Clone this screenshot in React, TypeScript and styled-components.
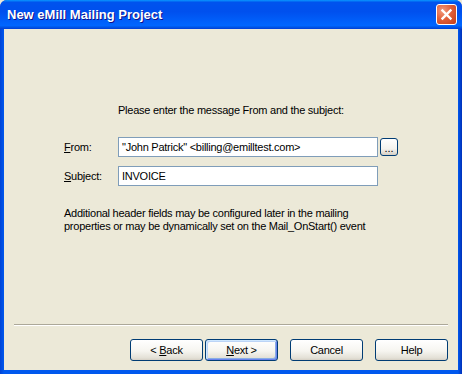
import styled, { createGlobalStyle } from 'styled-components';

const GlobalStyle = createGlobalStyle`
  html, body {
    margin: 0;
    padding: 0;
    background: #ece9d8;
    overflow: hidden;
  }
`;

const Window = styled.div`
  width: 462px;
  height: 374px;
  display: flex;
  flex-direction: column;
  font-family: 'Liberation Sans', Arial, sans-serif;
  font-size: 11px;
  letter-spacing: -0.25px;
  color: #000;
  background: #0831d9;
  border-radius: 7px 7px 0 0;
  overflow: hidden;
`;

const TitleBar = styled.div`
  height: 29px;
  flex-shrink: 0;
  display: flex;
  align-items: center;
  justify-content: space-between;
  padding: 0 5px 0 7px;
  box-sizing: border-box;
  background: linear-gradient(
    to bottom,
    #0997ff 0%,
    #0053ee 8%,
    #0050ee 40%,
    #06f 88%,
    #0055e5 94%,
    #003dd7 100%
  );
`;

const Title = styled.span`
  font-family: 'Liberation Sans', Arial, sans-serif;
  font-weight: bold;
  font-size: 13px;
  color: #fff;
  text-shadow: 1px 1px 0 #0f1089;
  letter-spacing: 0;
`;

const CloseButton = styled.div`
  width: 21px;
  height: 21px;
  box-sizing: border-box;
  border: 1px solid #fff;
  border-radius: 3px;
  display: flex;
  align-items: center;
  justify-content: center;
  background: radial-gradient(circle at 30% 30%, #f29b7e 0%, #e2613b 45%, #c43d16 100%);
`;

const Frame = styled.div`
  flex: 1;
  display: flex;
  padding: 0 4px 4px 4px;
  background: linear-gradient(to right, #0043d6, #0058ee 4px, #0058ee calc(100% - 4px), #0030b8);
`;

const Client = styled.div`
  flex: 1;
  display: flex;
  flex-direction: column;
  background: #ece9d8;
`;

const Content = styled.div`
  flex: 1;
  display: flex;
  flex-direction: column;
  padding: 75px 0 0 60px;
`;

const Prompt = styled.div`
  margin-left: 54px;
  line-height: 13px;
`;

const Form = styled.div`
  margin-top: 20px;
  display: grid;
  grid-template-columns: 54px 260px 20px;
  row-gap: 9px;
  align-items: center;
`;

const Label = styled.label`
  line-height: 13px;
`;

const TextBox = styled.div`
  height: 20px;
  width: 260px;
  box-sizing: border-box;
  border: 1px solid #7f9db9;
  background: #fff;
  padding: 0 3px;
  display: flex;
  align-items: center;
  white-space: nowrap;
  overflow: hidden;
`;

const BrowseButton = styled.div`
  width: 18px;
  height: 18px;
  margin-left: 2px;
  box-sizing: border-box;
  border: 1px solid #003c74;
  border-radius: 3px;
  background: linear-gradient(to bottom, #fff 0%, #f4f3ee 60%, #d6d0c5 100%);
  display: flex;
  align-items: flex-end;
  justify-content: center;
  padding-bottom: 3px;
  line-height: 8px;
  letter-spacing: 0;
`;

const Note = styled.div`
  margin-top: 21px;
  line-height: 13px;
  width: 320px;
`;

const Footer = styled.div`
  display: flex;
  flex-direction: column;
  padding: 0 10px 9px 10px;
`;

const Separator = styled.div`
  height: 1px;
  background: #aca899;
  border-bottom: 1px solid #fff;
`;

const ButtonRow = styled.div`
  margin-top: 13px;
  display: flex;
  justify-content: flex-end;
  gap: 12px;
`;

const ButtonPair = styled.div`
  display: flex;
  gap: 2px;
`;

const Button = styled.div<{ $default?: boolean }>`
  width: 73px;
  height: 22px;
  box-sizing: border-box;
  border: 1px solid #003c74;
  border-radius: 3px;
  background: linear-gradient(to bottom, #fff 0%, #f6f5f0 55%, #e3e0d6 90%, #d6d0c5 100%);
  display: flex;
  align-items: center;
  justify-content: center;
  line-height: 13px;
  white-space: pre;
  box-shadow: ${(p) =>
    p.$default
      ? 'inset 1px 1px 0 #cee7ff, inset -1px -1px 0 #6982ee, inset 2px 2px 0 #bcd4f6, inset -2px -2px 0 #89ade4'
      : 'none'};
`;

export default function App() {
  return (
    <>
      <GlobalStyle />
      <Window>
        <TitleBar>
          <Title>New eMill Mailing Project</Title>
          <CloseButton>
            <svg width="13" height="13" viewBox="0 0 13 13">
              <path d="M2.5 2.5 L10.5 10.5 M10.5 2.5 L2.5 10.5" stroke="#fff" strokeWidth="2.4" strokeLinecap="square" />
            </svg>
          </CloseButton>
        </TitleBar>
        <Frame>
          <Client>
            <Content>
              <Prompt>Please enter the message From and the subject:</Prompt>
              <Form>
                <Label>
                  <u>F</u>rom:
                </Label>
                <TextBox>"John Patrick" &lt;billing@emilltest.com&gt;</TextBox>
                <BrowseButton>...</BrowseButton>
                <Label>
                  <u>S</u>ubject:
                </Label>
                <TextBox>INVOICE</TextBox>
              </Form>
              <Note>
                Additional header fields may be configured later in the mailing properties or may be
                dynamically set on the Mail_OnStart() event
              </Note>
            </Content>
            <Footer>
              <Separator />
              <ButtonRow>
                <ButtonPair>
                  <Button>
                    <span>
                      &lt; <u>B</u>ack
                    </span>
                  </Button>
                  <Button $default>
                    <span>
                      <u>N</u>ext &gt;
                    </span>
                  </Button>
                </ButtonPair>
                <Button>Cancel</Button>
                <Button>Help</Button>
              </ButtonRow>
            </Footer>
          </Client>
        </Frame>
      </Window>
    </>
  );
}
